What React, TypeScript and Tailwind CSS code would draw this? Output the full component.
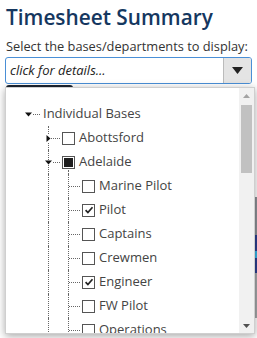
import type { ReactNode } from "react";

type Node = {
  label: string;
  level: 1 | 2;
  state?: "on" | "off" | "part";
  toggle?: "open" | "closed";
};

const rows: Node[] = [
  { label: "Abottsford", level: 1, state: "off", toggle: "closed" },
  { label: "Adelaide", level: 1, state: "part", toggle: "open" },
  { label: "Marine Pilot", level: 2, state: "off" },
  { label: "Pilot", level: 2, state: "on" },
  { label: "Captains", level: 2, state: "off" },
  { label: "Crewmen", level: 2, state: "off" },
  { label: "Engineer", level: 2, state: "on" },
  { label: "FW Pilot", level: 2, state: "off" },
  { label: "Operations", level: 2, state: "off" },
];

function Down() {
  return (
    <svg width="7" height="5" viewBox="0 0 7 5" className="relative bg-white">
      <path d="M0 0.5h7L3.5 4.5z" fill="#111" />
    </svg>
  );
}

function Right() {
  return (
    <svg width="5" height="7" viewBox="0 0 5 7" className="relative bg-white">
      <path d="M0.5 0v7L4.5 3.5z" fill="#111" />
    </svg>
  );
}

function Box({ state }: { state: "on" | "off" | "part" }) {
  return (
    <span className="flex h-[13px] w-[13px] shrink-0 items-center justify-center border border-[#555] bg-white">
      {state === "part" && <span className="h-[9px] w-[9px] bg-[#1e1e1e]" />}
      {state === "on" && (
        <svg width="10" height="10" viewBox="0 0 10 10">
          <path d="M1.6 5.2l2.3 2.4L8.5 2.2" fill="none" stroke="#222" strokeWidth="1.7" />
        </svg>
      )}
    </span>
  );
}

// one 20px indent column: optional vertical guide, horizontal guide and toggle
function Col({ v, h, children }: { v?: boolean; h?: boolean; children?: ReactNode }) {
  return (
    <span className="relative flex h-full w-[20px] shrink-0 items-center justify-center">
      {v && <span className="absolute left-[10px] top-0 h-full border-l border-dotted border-[#666]" />}
      {h && <span className="absolute left-[11px] right-[-2px] top-[12px] border-t border-dotted border-[#666]" />}
      {children}
    </span>
  );
}

function Row({ n }: { n: Node }) {
  return (
    <div className="flex h-[24px] items-center">
      <Col />
      <Col v h={n.level === 1}>
        {n.level === 1 && (n.toggle === "open" ? <Down /> : <Right />)}
      </Col>
      {n.level === 2 && <Col v h />}
      <span className="relative mx-[4px]">
        <Box state={n.state ?? "off"} />
        {n.toggle === "open" && (
          <span className="absolute left-[6px] top-[14px] h-[12px] border-l border-dotted border-[#666]" />
        )}
      </span>
      <span className="text-[13px] text-[#444]">{n.label}</span>
    </div>
  );
}

export default function App() {
  return (
    <div
      className="relative h-[338px] w-[257px] overflow-hidden bg-white"
      style={{ fontFamily: '"Open Sans", sans-serif' }}
    >
      <div className="px-[6px] pt-[3px]">
        <h1 className="whitespace-nowrap text-[20.8px] font-semibold leading-[28px] text-[#15375f]">Timesheet Summary</h1>
        <p className="mt-[6px] whitespace-nowrap text-[12.8px] leading-[18px] text-[#333]">
          Select the bases/departments to display:
        </p>
      </div>

      <div className="relative mx-[5px] mt-[2px] flex h-[27px] rounded-[3px] border border-[#4a8fd6]">
        <span className="flex flex-1 items-center pl-[4px] text-[13px] italic text-[#222]">click for details...</span>
        <span className="flex w-[28px] items-center justify-center rounded-r-[2px] border-l border-[#bbb] bg-[#e4e4e4]">
          <svg width="11" height="7" viewBox="0 0 11 7">
            <path d="M0 0h11L5.5 7z" fill="#222" />
          </svg>
        </span>
      </div>

      {/* page content behind the open dropdown */}
      <div className="ml-[6px] mt-[1px] h-[18px] w-[67px] rounded-t-[3px] bg-[#1b2430]" />
      <div className="ml-[230px] mt-[94px] flex flex-col">
        <div className="h-[38px] bg-[#8d9096]" />
        <div className="flex h-[38px] flex-col justify-center bg-[#2b3e8e]">
          <div className="h-[7px] bg-[#37b3e6]" />
        </div>
        <div className="h-[45px] bg-[#a4a6a8]" />
      </div>
      <p className="mt-[18px] pl-[63px] text-[13px] font-bold leading-[16px] text-[#222]">Abottsford</p>

      <div className="absolute left-[5px] top-[87px] flex h-[247px] w-[250px] border border-[#cfcfcf] bg-white shadow-[0_2px_8px_rgba(0,0,0,0.35)]">
        <div className="flex-1 overflow-hidden pl-[12px] pt-[14px]">
          <div className="flex h-[24px] items-center">
            <Col h>
              <Down />
            </Col>
            <span className="ml-[5px] text-[13px] text-[#444]">Individual Bases</span>
          </div>
          {rows.map((n) => (
            <Row key={n.label} n={n} />
          ))}
        </div>
        <div className="flex w-[15px] flex-col items-center bg-[#f1f1f1]">
          <div className="flex h-[15px] items-center">
            <svg width="7" height="4" viewBox="0 0 7 4">
              <path d="M0 4h7L3.5 0z" fill="#a3a3a3" />
            </svg>
          </div>
          <div className="mt-[2px] h-[68px] w-[11px] bg-[#c1c1c1]" />
          <div className="flex-1" />
          <div className="flex h-[15px] items-center">
            <svg width="7" height="4" viewBox="0 0 7 4">
              <path d="M0 0h7L3.5 4z" fill="#505050" />
            </svg>
          </div>
        </div>
      </div>
    </div>
  );
}
